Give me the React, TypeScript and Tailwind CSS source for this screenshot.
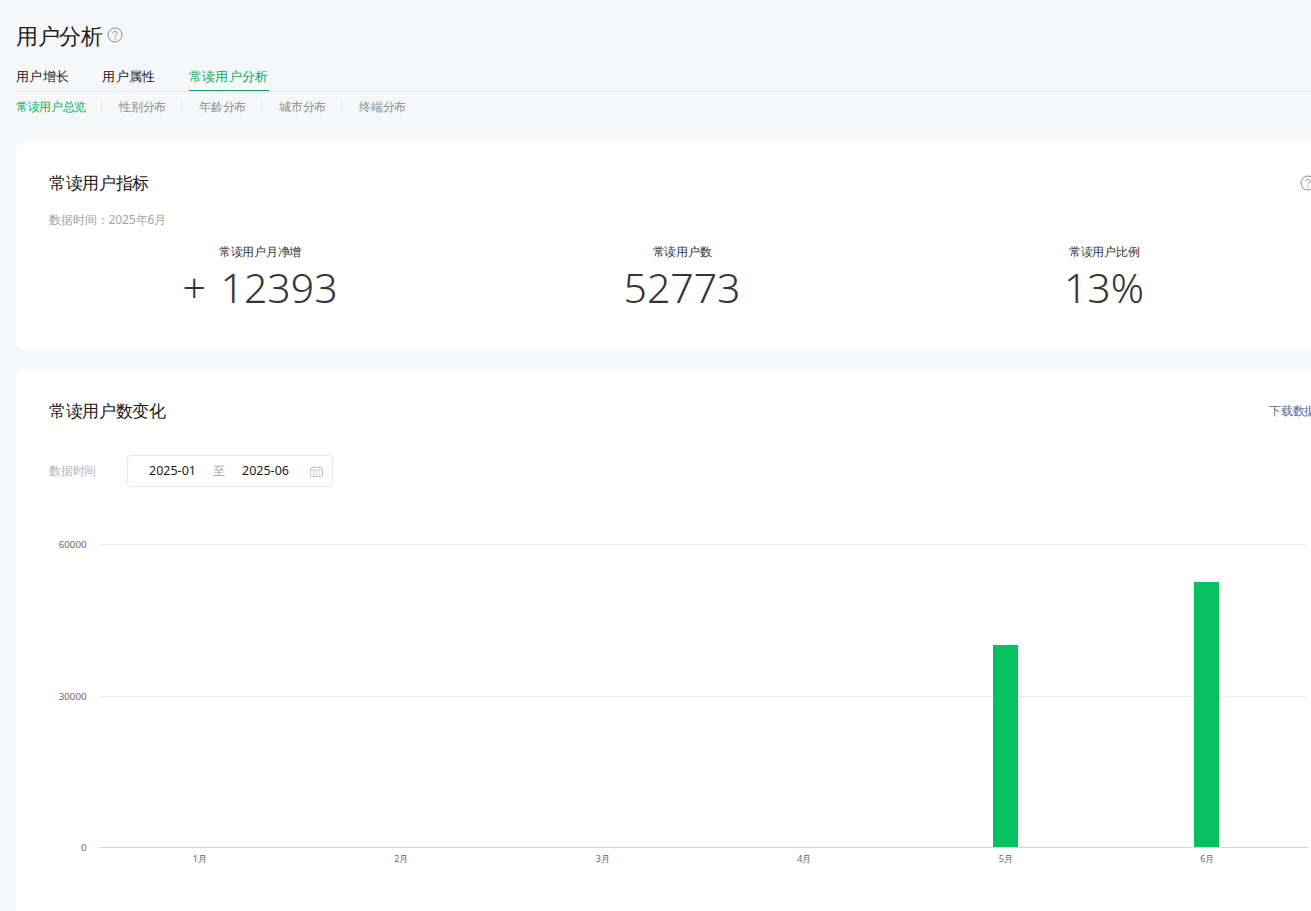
import React from "react";

const subTabs = ["性别分布", "年龄分布", "城市分布", "终端分布"];

const metrics = [
  { label: "常读用户月净增", value: "+ 12393" },
  { label: "常读用户数", value: "52773" },
  { label: "常读用户比例", value: "13%" },
];

const months = ["1月", "2月", "3月", "4月", "5月", "6月"];
const values = [0, 0, 0, 0, 40000, 52500];

function HelpIcon() {
  return (
    <svg width="16" height="16" viewBox="0 0 16 16" fill="none" className="shrink-0">
      <circle cx="8" cy="8" r="7" stroke="#8c8c8c" strokeWidth="1" />
      <path
        d="M5.9 6.3c0-1.2.9-2 2.1-2s2.1.8 2.1 1.9c0 .8-.4 1.2-1.1 1.7-.7.4-1 .8-1 1.5v.3"
        stroke="#8c8c8c"
        strokeWidth="1"
      />
      <circle cx="8" cy="11.7" r=".7" fill="#8c8c8c" />
    </svg>
  );
}

function CalendarIcon() {
  return (
    <svg width="13" height="11" viewBox="0 0 13 11" fill="none">
      <rect x="0.5" y="1.5" width="12" height="9" rx="1.5" stroke="#c4c4c4" />
      <path d="M1 4h11M3.5 0v2M9.5 0v2" stroke="#c4c4c4" />
      <path d="M3 6h1.5M5.8 6h1.5M8.5 6H10M3 8.3h1.5M5.8 8.3h1.5M8.5 8.3H10" stroke="#c4c4c4" />
    </svg>
  );
}

function BarChart() {
  const left = 99;
  const right = 1308;
  const top = 15;
  const bottom = 318;
  const step = (right - left) / 6;
  const ticks = [
    { label: "60000", y: top },
    { label: "30000", y: Math.ceil((top + bottom) / 2) },
  ];

  return (
    <svg width="1334" height="400" viewBox="16 0 1334 400" className="block">
      {ticks.map((t) => (
        <g key={t.label}>
          <line x1={left} x2={right} y1={t.y + 0.5} y2={t.y + 0.5} stroke="#eeeeee" />
          <text x="86.5" y={t.y + 3.5} textAnchor="end" fontSize="9.7" fill="#666666">
            {t.label}
          </text>
        </g>
      ))}
      <text x="86.5" y={bottom + 3.5} textAnchor="end" fontSize="9.7" fill="#666666">
        0
      </text>
      {values.map((v, i) => {
        const h = (v / 60000) * (bottom - top);
        return (
          <rect
            key={months[i]}
            x={Math.floor(left + step * i + step / 2 - 12.5)}
            y={bottom - h}
            width="25"
            height={h}
            fill="#07c160"
          />
        );
      })}
      <line x1={left} x2={right} y1={bottom + 0.5} y2={bottom + 0.5} stroke="#d3d8e0" />
      {months.map((m, i) => (
        <text
          key={m}
          x={left + step * i + step / 2}
          y={bottom + 15}
          textAnchor="middle"
          fontSize="9"
          fill="#666666"
        >
          {m}
        </text>
      ))}
    </svg>
  );
}

export default function App() {
  return (
    <div className="h-[911px] w-[1311px] overflow-hidden bg-[#f6f7f9] font-['Noto_Sans','Noto_Sans_CJK_SC',sans-serif] text-[#1a1a1a]">
      <div className="w-[1350px] pl-4 pt-[23px]">
        <div className="flex h-[24px] items-center gap-[5px]">
          <h1 className="text-[22px] font-normal leading-[24px] tracking-[-0.5px]">用户分析</h1>
          <HelpIcon />
        </div>

        <div className="mt-[20px] flex gap-[33px] border-b border-[#e2e4e8] text-[13px] leading-[19px] tracking-[0.33px]">
          <span className="h-[24px]">用户增长</span>
          <span className="h-[24px]">用户属性</span>
          <span className="-mb-px h-[24px] border-b border-[#06ae56] text-[#06ae56]">常读用户分析</span>
        </div>

        <div className="mt-[7px] flex items-center text-[12px] leading-[16px] tracking-[-0.25px] text-[#8c8c8c]">
          <span className="tracking-[-0.33px] text-[#06ae56]">常读用户总览</span>
          {subTabs.map((t) => (
            <React.Fragment key={t}>
              <span className="ml-[15px] mr-[17px] h-[10px] w-px bg-[#e2e4e8]" />
              <span>{t}</span>
            </React.Fragment>
          ))}
        </div>

        <section className="mt-[27px] h-[207px] rounded-[6px] bg-white pl-[33px] pr-[34px] pt-[29px]">
          <div className="flex h-[23px] items-center justify-between">
            <h2 className="text-[17px] font-normal leading-[23px] tracking-[-0.33px]">常读用户指标</h2>
            <HelpIcon />
          </div>
          <p className="mt-[18px] text-[12px] leading-[16px] tracking-[-0.1px] text-[#a3a3a3]">数据时间：2025年6月</p>
          <div className="mt-[16px] grid w-[1266px] grid-cols-3 text-center">
            {metrics.map((m) => (
              <div key={m.label}>
                <div className="text-[12px] leading-[16px] tracking-[-0.25px] text-[#353535]">{m.label}</div>
                <div className="mt-[2px] text-[41px] font-light leading-[50px] text-[#353535] [word-spacing:4px]">
                  {m.value}
                </div>
              </div>
            ))}
          </div>
        </section>

        <section className="mt-[20px] h-[560px] rounded-[6px] bg-white pt-[30px]">
          <div className="flex h-[23px] items-center justify-between pl-[33px] pr-[34px]">
            <h2 className="text-[17px] font-normal leading-[23px] tracking-[-0.33px]">常读用户数变化</h2>
            <a className="text-[12px] tracking-[-0.25px] text-[#576b95]">下载数据</a>
          </div>
          <div className="mt-[33px] flex items-center px-[33px]">
            <span className="w-[78px] text-[12px] tracking-[-0.25px] text-[#b5b5b5]">数据时间</span>
            <div className="flex h-[32px] w-[206px] items-center whitespace-nowrap rounded-[4px] border border-[#e7e7e7] pl-[21px] pr-[9px] text-[12.5px] text-[#1a1a1a]">
              <span className="w-[46px]">2025-01</span>
              <span className="ml-[18px] text-[12px] text-[#a3a3a3]">至</span>
              <span className="ml-[17px] w-[46px]">2025-06</span>
              <span className="ml-auto flex">
                <CalendarIcon />
              </span>
            </div>
          </div>
          <div className="mt-[42px]">
            <BarChart />
          </div>
        </section>
      </div>
    </div>
  );
}
